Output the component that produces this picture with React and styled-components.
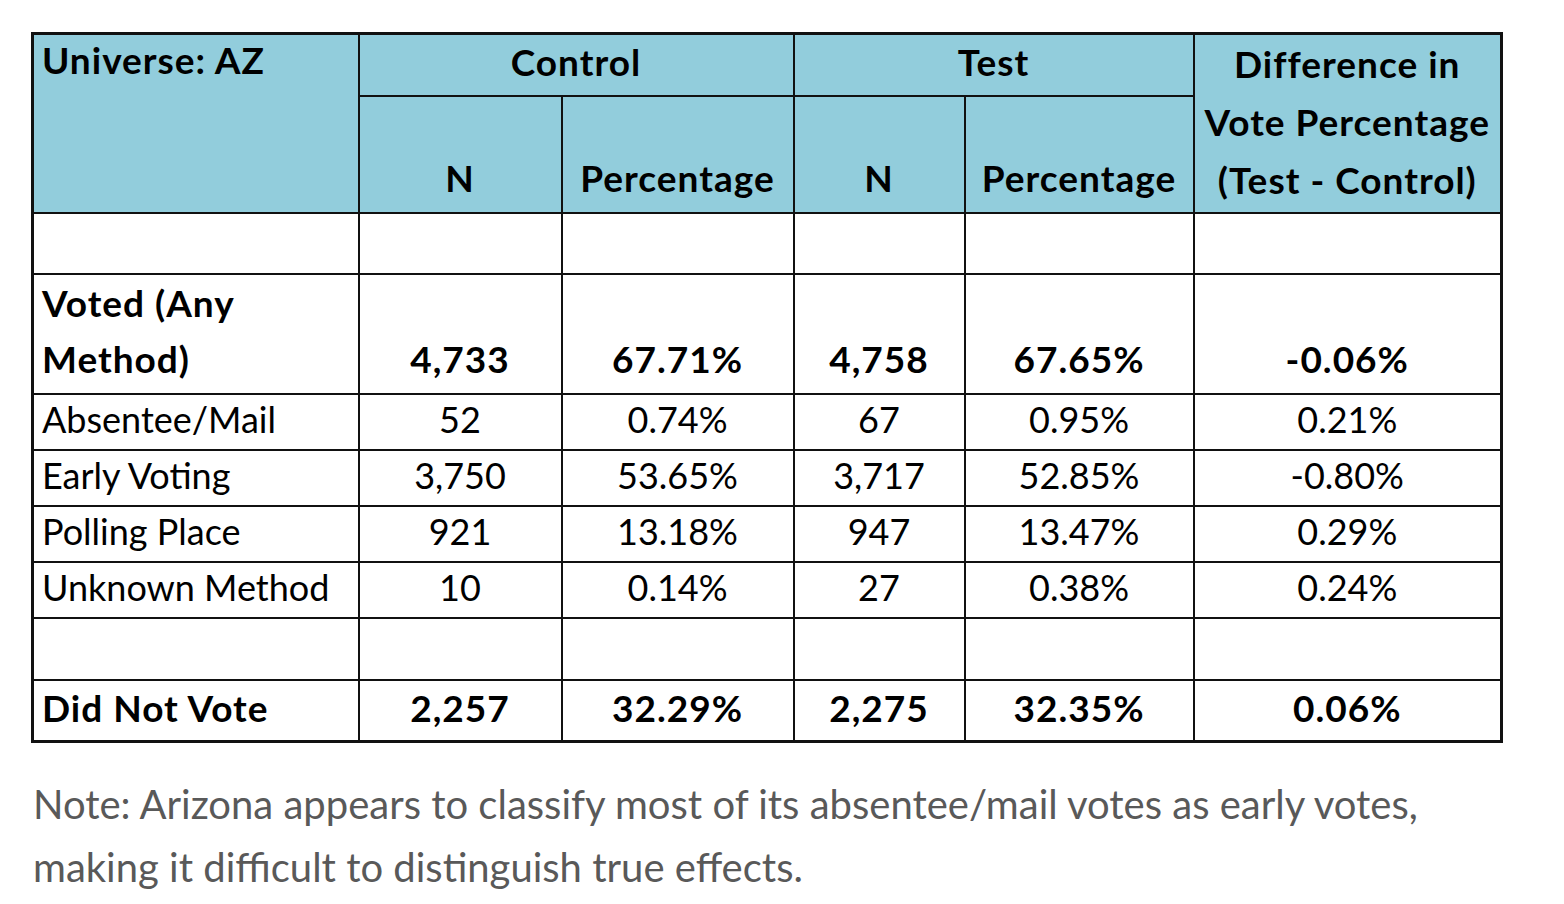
import React from 'react';
import styled, { createGlobalStyle } from 'styled-components';

const GlobalStyle = createGlobalStyle`
  body {
    margin: 0;
    background: #ffffff;
  }
`;

const Page = styled.div`
  padding: 32px 0 0 31px;
  width: 1533px;
  box-sizing: border-box;
`;

const Table = styled.table`
  border-collapse: collapse;
  table-layout: fixed;
  width: 1469px;
  font-family: Lato, 'Liberation Sans', sans-serif;
  font-size: 36px;
  color: #000;
  border: 3px solid #111;
`;

const Cell = styled.td`
  border: 2px solid #111;
  padding: 0 8px ${p => (p.$tight ? '5px' : p.$valign ? '2px' : '6px')};
  height: ${p => p.$h}px;
  line-height: ${p => (p.$tight ? '40px' : p.$valign === 'top' ? '50px' : p.$valign ? '58px' : '56px')};
  text-align: ${p => (p.$left ? 'left' : 'center')};
  vertical-align: ${p => p.$valign || 'bottom'};
  font-weight: ${p => (p.$bold ? 700 : 400)};
  font-size: ${p => (p.$bold ? '37px' : '36px')};
  letter-spacing: ${p => (p.$bold ? '1px' : '0')};
  background: ${p => (p.$head ? '#92cddc' : '#fff')};
  white-space: nowrap;
  box-sizing: border-box;
`;

const Note = styled.p`
  margin: 30px 0 0 2px;
  font-family: Lato, 'Open Sans', sans-serif;
  font-size: 40px;
  line-height: 63px;
  color: #595959;
  width: 1440px;
`;

const rows = [
  { label: 'Absentee/Mail', v: ['52', '0.74%', '67', '0.95%', '0.21%'] },
  { label: 'Early Voting', v: ['3,750', '53.65%', '3,717', '52.85%', '-0.80%'] },
  { label: 'Polling Place', v: ['921', '13.18%', '947', '13.47%', '0.29%'] },
  { label: 'Unknown Method', v: ['10', '0.14%', '27', '0.38%', '0.24%'] },
];

const Blank = ({ h }) => (
  <tr>
    {[0, 1, 2, 3, 4, 5].map(i => (
      <Cell key={i} $h={h} $tight />
    ))}
  </tr>
);

export default function App() {
  return (
    <>
      <GlobalStyle />
      <Page>
        <Table>
          <colgroup>
            <col style={{ width: 326 }} />
            <col style={{ width: 203 }} />
            <col style={{ width: 232 }} />
            <col style={{ width: 171 }} />
            <col style={{ width: 229 }} />
            <col style={{ width: 308 }} />
          </colgroup>
          <tbody>
            <tr>
              <Cell $head $bold $left $valign="top" rowSpan={2}>Universe: AZ</Cell>
              <Cell $head $bold $tight $h={62} $valign="middle" colSpan={2}>Control</Cell>
              <Cell $head $bold $tight $valign="middle" colSpan={2}>Test</Cell>
              <Cell $head $bold $valign="middle" rowSpan={2}>
                Difference in<br />Vote Percentage<br />(Test - Control)
              </Cell>
            </tr>
            <tr>
              <Cell $head $bold $h={117}>N</Cell>
              <Cell $head $bold>Percentage</Cell>
              <Cell $head $bold>N</Cell>
              <Cell $head $bold>Percentage</Cell>
            </tr>
            <Blank h={61} />
            <tr>
              <Cell $bold $left $h={120}>Voted (Any<br />Method)</Cell>
              <Cell $bold>4,733</Cell>
              <Cell $bold>67.71%</Cell>
              <Cell $bold>4,758</Cell>
              <Cell $bold>67.65%</Cell>
              <Cell $bold>-0.06%</Cell>
            </tr>
            {rows.map(r => (
              <tr key={r.label}>
                <Cell $left $tight $h={56} $valign="middle">{r.label}</Cell>
                {r.v.map((x, i) => (
                  <Cell key={i} $tight $valign="middle">{x}</Cell>
                ))}
              </tr>
            ))}
            <Blank h={62} />
            <tr>
              <Cell $bold $tight $left $h={62} $valign="middle">Did Not Vote</Cell>
              <Cell $bold $tight $valign="middle">2,257</Cell>
              <Cell $bold $tight $valign="middle">32.29%</Cell>
              <Cell $bold $tight $valign="middle">2,275</Cell>
              <Cell $bold $tight $valign="middle">32.35%</Cell>
              <Cell $bold $tight $valign="middle">0.06%</Cell>
            </tr>
          </tbody>
        </Table>
        <Note>
          Note: Arizona appears to classify most of its absentee/mail votes as early votes,
          making it difficult to distinguish true effects.
        </Note>
      </Page>
    </>
  );
}
